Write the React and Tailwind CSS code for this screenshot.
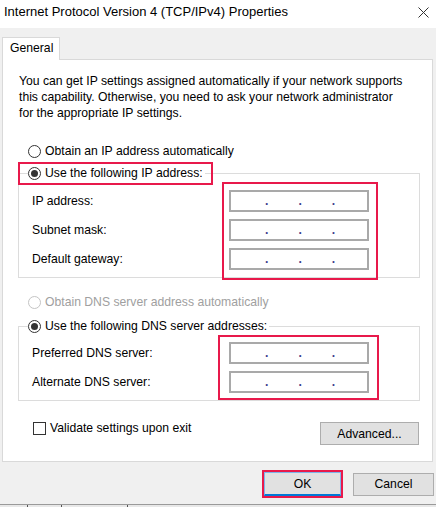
import React from "react";

const RED = "border-[#e8194b]";

function Radio({ checked, disabled, children }) {
  return (
    <span className={`flex items-center gap-[4px] h-[16px] ${disabled ? "text-[#a0a0a0]" : "text-black"}`}>
      <span
        className={`w-[13px] h-[13px] rounded-full border bg-white flex items-center justify-center ${
          disabled ? "border-[#c4c4c4]" : "border-[#333333]"
        }`}
      >
        {checked && <span className="w-[7px] h-[7px] rounded-full bg-[#333333]" />}
      </span>
      <span className="whitespace-nowrap">{children}</span>
    </span>
  );
}

function IpField() {
  return (
    <div className="w-[140px] h-[22px] border-2 border-[#a9a9a9] bg-white flex items-end pb-[1px] pl-[34px] gap-[30px] text-[#3c3c8c] font-bold leading-[16px]">
      <span>.</span>
      <span>.</span>
      <span>.</span>
    </div>
  );
}

function IpGroup({ legend, labels, pad, box }) {
  return (
    <fieldset className={`w-[402px] border border-[#dcdcdc] pl-[9px] ${pad}`}>
      <legend className="relative pr-[2px]">
        <Radio checked>{legend.text}</Radio>
        {legend.boxed && (
          <span className={`absolute -left-[10px] -right-[8px] -top-[3px] -bottom-[4px] border-2 ${RED}`} />
        )}
      </legend>
      <div className="flex ml-[4px]">
        <div className="w-[197px] flex flex-col gap-[7px]">
          {labels.map((l) => (
            <div key={l} className="h-[22px] flex items-center whitespace-nowrap">
              {l}
            </div>
          ))}
        </div>
        <div className="relative flex flex-col gap-[7px]">
          {labels.map((l) => (
            <IpField key={l} />
          ))}
          <span className={`absolute border-2 ${RED} ${box}`} />
        </div>
      </div>
    </fieldset>
  );
}

export default function App() {
  return (
    <div
      className="w-[436px] h-[507px] bg-[#f0f0f0] text-[12.2px] leading-[16px] text-black flex flex-col overflow-hidden"
      style={{ fontFamily: '"Liberation Sans", Arial, sans-serif' }}
    >
      {/* title bar */}
      <div className="h-[28px] bg-white flex items-start justify-between pl-[4px] pr-[7px] pt-[4px]">
        <span className="text-[13px]">Internet Protocol Version 4 (TCP/IPv4) Properties</span>
        <svg width="11" height="11" viewBox="0 0 11 11" className="mt-[3px]">
          <path d="M0.5 0.5 L10.5 10.5 M10.5 0.5 L0.5 10.5" stroke="#333" strokeWidth="1" fill="none" />
        </svg>
      </div>

      {/* tab */}
      <div className="mt-[9px] ml-[2px] w-[58px] h-[23px] -mb-px relative z-10 bg-white border border-b-0 border-[#d9d9d9] pl-[7px] pt-[2px]">
        General
      </div>

      {/* panel */}
      <div className="ml-[2px] w-[431px] h-[403px] bg-white border border-[#d9d9d9] pl-[15px] pt-[13px]">
        <p className="pl-[1px] whitespace-nowrap">
          You can get IP settings assigned automatically if your network supports
          <br />
          this capability. Otherwise, you need to ask your network administrator
          <br />
          for the appropriate IP settings.
        </p>

        <div className="mt-[22px] ml-[10px]">
          <Radio>Obtain an IP address automatically</Radio>
        </div>

        <div className="mt-[6px]">
          <IpGroup
            legend={{ text: "Use the following IP address:", boxed: true }}
            labels={["IP address:", "Subnet mask:", "Default gateway:"]}
            pad="pt-[9px] pb-[7px]"
            box="-left-[7px] -right-[9px] -top-[8px] -bottom-[10px]"
          />
        </div>

        <div className="mt-[16px] ml-[10px]">
          <Radio disabled>Obtain DNS server address automatically</Radio>
        </div>

        <div className="mt-[8px]">
          <IpGroup
            legend={{ text: "Use the following DNS server addresses:" }}
            labels={["Preferred DNS server:", "Alternate DNS server:"]}
            pad="pt-[8px] pb-[7px]"
            box="-left-[11px] -right-[10px] -top-[7px] -bottom-[7px]"
          />
        </div>

        <div className="mt-[20px] w-[402px] flex justify-between items-start">
          <label className="ml-[15px] flex items-center gap-[4px] h-[14px]">
            <span className="w-[13px] h-[13px] border border-[#333333] bg-white" />
            <span>Validate settings upon exit</span>
          </label>
          <button className="mt-[1px] mr-[1px] w-[99px] h-[23px] border border-[#adadad] bg-[#e1e1e1] leading-[20px]">
            Advanced...
          </button>
        </div>
      </div>

      {/* dialog buttons */}
      <div className="mt-[8px] flex justify-end items-center gap-[10px] pr-[2px]">
        <div className={`w-[81px] h-[28px] border-2 ${RED}`}>
          <button className="w-full h-full bg-[#e1e1e1] border border-[#7eb4ea] border-b-2 border-b-[#0078d7] leading-[20px]">
            OK
          </button>
        </div>
        <button className="w-[81px] h-[23px] border border-[#adadad] bg-[#e1e1e1] leading-[20px]">Cancel</button>
      </div>

      {/* taskbar edge */}
      <div className="mt-auto h-[3px] border-t border-[#9a9a9a] bg-[#e8e8e8] flex">
        <span className="ml-[27px] w-px h-full bg-[#555]" />
        <span className="ml-[33px] w-px h-full bg-[#555]" />
        <span className="ml-[65px] w-px h-full bg-[#555]" />
      </div>
    </div>
  );
}
